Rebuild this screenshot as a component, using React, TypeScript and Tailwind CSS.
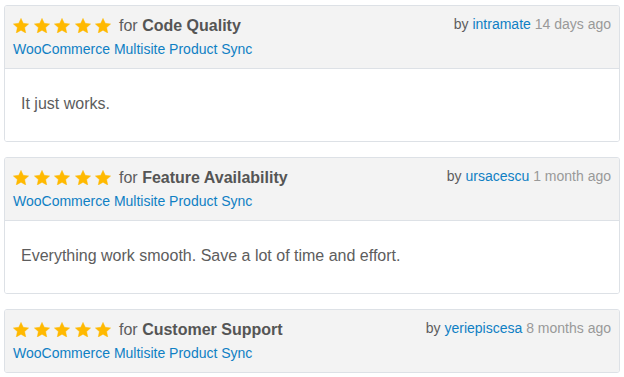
import React from "react";

const reviews = [
  { topic: "Code Quality", user: "intramate", when: "14 days ago", body: "It just works." },
  { topic: "Feature Availability", user: "ursacescu", when: "1 month ago", body: "Everything work smooth. Save a lot of time and effort." },
  { topic: "Customer Support", user: "yeriepiscesa", when: "8 months ago", body: null },
];

function Star() {
  return (
    <svg viewBox="-0.5 -0.5 20.022 19.09" className="shrink-0 block w-[16px] h-[15.3px]">
      <polygon
        points="9.511,0 12.332,6.117 19.022,6.91 14.076,11.483 15.389,18.09 9.511,14.8 3.633,18.09 4.946,11.483 0,6.91 6.69,6.117"
        fill="#ffb900"
        stroke="#ffb900"
        strokeWidth="0.6"
        strokeLinejoin="round"
      />
    </svg>
  );
}

export default function App() {
  return (
    <div className="w-[624px] h-[377px] bg-white pt-[5px] px-[4px] flex flex-col gap-[15px]" style={{ fontFamily: '"Liberation Sans", Arial, sans-serif' }}>
      {reviews.map((r) => (
        <div key={r.topic} className="w-[616px] border border-[#dde1e6] rounded-[3px] overflow-hidden">
          <div className="bg-[#f3f3f3] pl-2 pr-[8px] pt-2 pb-[9px] flex justify-between">
            <div className="flex flex-col">
              <div className="flex items-center h-[24px]">
                <div className="flex gap-[4.5px] -mt-[1px]">
                  <Star />
                  <Star />
                  <Star />
                  <Star />
                  <Star />
                </div>
                <span className="ml-[8px] text-[16px] text-[#5d5d5d]">
                  for <b className="font-bold text-[#555]">{r.topic}</b>
                </span>
              </div>
              <div className="mt-[1px] h-[20px] leading-[20px] text-[14px] text-[#0f80c4]">WooCommerce Multisite Product Sync</div>
            </div>
            <div className="text-[14px] leading-[20px] text-[#5d5d5d]">
              by <span className="text-[#0f80c4]">{r.user}</span> <span className="text-[#999]">{r.when}</span>
            </div>
          </div>
          {r.body && (
            <div className="border-t border-[#dde1e6] bg-white px-4 pt-[23px] pb-[25px] text-[16px] leading-[24px] text-[#5d5d5d]">
              {r.body}
            </div>
          )}
        </div>
      ))}
    </div>
  );
}
